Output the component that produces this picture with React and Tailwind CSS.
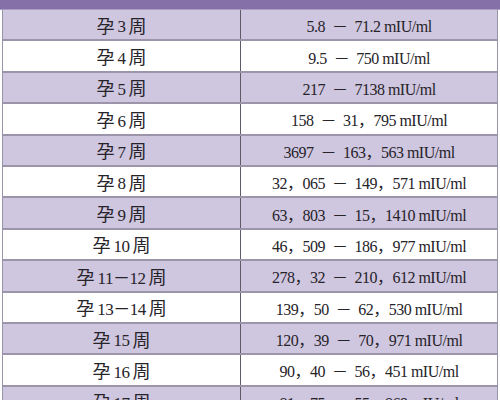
const rows = [
  ["3", "5.8 － 71.2 mIU/ml"],
  ["4", "9.5 － 750 mIU/ml"],
  ["5", "217 － 7138 mIU/ml"],
  ["6", "158 － 31，795 mIU/ml"],
  ["7", "3697 － 163，563 mIU/ml"],
  ["8", "32，065 － 149，571 mIU/ml"],
  ["9", "63，803 － 15，1410 mIU/ml"],
  ["10", "46，509 － 186，977 mIU/ml"],
  ["11－12", "278，32 － 210，612 mIU/ml"],
  ["13－14", "139，50 － 62，530 mIU/ml"],
  ["15", "120，39 － 70，971 mIU/ml"],
  ["16", "90，40 － 56，451 mIU/ml"],
  ["17", "81，75 － 55，869 mIU/ml"],
];

export default function App() {
  return (
    <div
      className="w-[500px] h-[400px] overflow-hidden bg-white text-[#262329]"
      style={{ fontFamily: "'Liberation Serif', 'Noto Sans CJK SC', serif" }}
    >
      <div className="h-[10px] bg-[#8670a8] border-b border-[#a89cc0]" />
      <div className="mx-[2px] border-x border-[#9a94a8]">
        {rows.map(([week, value], i) => {
          const [from, to] = value.split(" － ");
          return (
            <div
              key={week}
              className={`flex h-[31.4px] border-b-2 border-[#9c95aa] ${
                i % 2 === 0 ? "bg-[#cfc6df]" : "bg-white"
              }`}
            >
              <div className="w-[238px] flex items-center justify-center gap-[3px] border-r border-[#5e5a66] pt-[5px] text-[17px]">
                <span className="text-[18px]">孕</span>
                <span className="tracking-[-0.5px]">{week}</span>
                <span className="text-[18px]">周</span>
              </div>
              <div className="flex-1 flex items-center justify-center pt-[5px] text-[16px] tracking-[-0.5px]">
                <span>{from}</span>
                <span className="mx-[7px]">－</span>
                <span>{to}</span>
              </div>
            </div>
          );
        })}
      </div>
    </div>
  );
}
